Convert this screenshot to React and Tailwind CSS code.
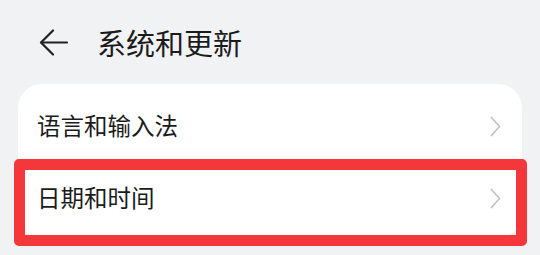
export default function App() {
  const items = ["语言和输入法", "日期和时间"];
  return (
    <div
      className="relative h-[255px] w-[540px] overflow-hidden bg-[#f1f2f4] text-[#1b1b1b]"
      style={{ fontFamily: '"Noto Sans CJK SC", "Noto Sans", sans-serif' }}
    >
      <div className="flex h-[84px] items-center pl-[39px]">
        <svg width="29" height="27" viewBox="0 0 29 27" fill="none" className="shrink-0">
          <path d="M28 13.5H2.5" stroke="#222" strokeWidth="2.2" strokeLinecap="round" />
          <path d="M14 1.5L2 13.5L14 25.5" stroke="#222" strokeWidth="2.2" strokeLinecap="round" strokeLinejoin="round" />
        </svg>
        <span className="ml-[29px] text-[29px] leading-none font-normal">系统和更新</span>
      </div>
      <div className="mx-[18px] rounded-[24px] bg-white pt-[6px] pb-[4px]">
        {items.map((t) => (
          <div key={t} className="flex h-[72px] items-center justify-between pl-[19px] pr-[21px]">
            <span className="text-[23.5px] leading-none">{t}</span>
            <svg width="11" height="21" viewBox="0 0 11 21" fill="none">
              <path d="M1.5 1.5L9.5 10.5L1.5 19.5" stroke="#c4c4c4" strokeWidth="1.8" strokeLinecap="round" strokeLinejoin="round" />
            </svg>
          </div>
        ))}
      </div>
      <div className="pointer-events-none absolute left-[14px] top-[159px] h-[87px] w-[513px] rounded-[5px] border-[11px] border-[#f4373b]" />
    </div>
  );
}
